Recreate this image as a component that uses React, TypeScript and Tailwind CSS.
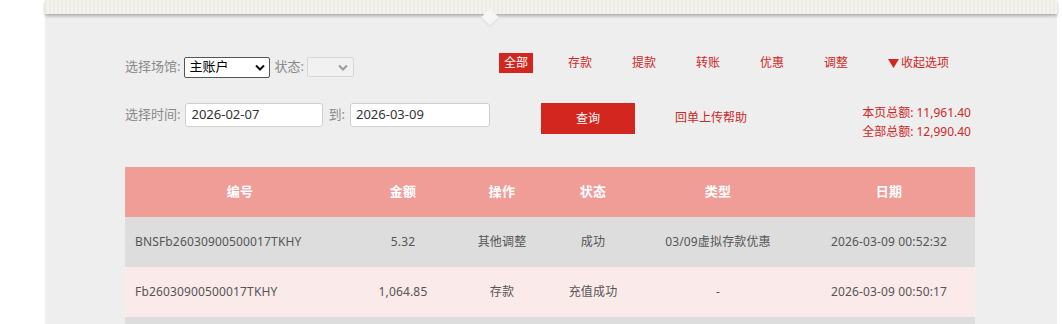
const tabs = ["存款", "提款", "转账", "优惠", "调整"]

const rows = [
  { id: "BNSFb26030900500017TKHY", amount: "5.32", op: "其他调整", status: "成功", type: "03/09虚拟存款优惠", date: "2026-03-09 00:52:32", bg: "bg-[#dddddd]" },
  { id: "Fb26030900500017TKHY", amount: "1,064.85", op: "存款", status: "充值成功", type: "-", date: "2026-03-09 00:50:17", bg: "bg-[#fbeaea]" },
]

function Chevron({ color }: { color: string }) {
  return (
    <svg width="10" height="7" viewBox="0 0 10 7" className="shrink-0">
      <path d="M1 1.5 L5 5.5 L9 1.5" fill="none" stroke={color} strokeWidth="2" />
    </svg>
  )
}

export default function App() {
  return (
    <div className="w-full h-[324px] bg-white overflow-hidden font-['Noto_Sans','Noto_Sans_CJK_SC',sans-serif]">
      <div className="relative ml-[45px] w-[1012px] h-full bg-[#eeeeee]">
        {/* textured banner edge */}
        <div className="h-[14px] bg-[repeating-linear-gradient(90deg,#eeece5_0px,#eeece5_2px,#f4f2ec_2px,#f4f2ec_4px)] shadow-[0_2px_3px_rgba(0,0,0,0.28)]" />
        <div className="absolute left-[439px] top-[11px] w-[12px] h-[12px] rotate-45 bg-[#f6f6f6] shadow-[1px_1px_2px_rgba(0,0,0,0.08)]" />

        <div className="pl-[80px] pt-[39px]">
          {/* row 1 */}
          <div className="flex h-[26px]">
            <div className="w-[374px] flex items-center gap-[3px] pt-[2px] text-[13px] text-[#8a8a8a]">
              <span>选择场馆:</span>
              <div className="ml-[1px] w-[86px] h-[21px] flex items-center justify-between px-[4px] border border-[#555] rounded-[2px] bg-white text-[13px] text-black">
                <span>主账户</span>
                <Chevron color="#111" />
              </div>
              <span className="ml-[1px]">状态:</span>
              <div className="w-[47px] h-[20px] flex items-center justify-end pr-[5px] border border-[#d6d6d6] rounded-[2px] bg-[#f1f1f1]">
                <Chevron color="#9a9a9a" />
              </div>
            </div>
            <div className="flex items-start text-[12px] text-[#d0271f]">
              <span className="w-[34px] h-[20px] leading-[20px] text-center bg-[#d2261e] text-white">全部</span>
              <div className="flex ml-[35px] gap-[40px] leading-[20px]">
                {tabs.map((t) => (
                  <span key={t}>{t}</span>
                ))}
                <span className="flex items-center">
                  <svg width="11" height="9" viewBox="0 0 11 9" className="mr-[2px]">
                    <path d="M0 0 H11 L5.5 9 Z" fill="#d0271f" />
                  </svg>
                  收起选项
                </span>
              </div>
            </div>
          </div>

          {/* row 2 */}
          <div className="flex items-start mt-[24px] w-[850px]">
            <div className="flex items-center h-[24px] text-[13px] text-[#8a8a8a]">
              <span>选择时间:</span>
              <div className="ml-[5px] w-[138px] h-[24px] flex items-center px-[5px] border border-[#cfcfcf] rounded-[3px] bg-white text-[13px] text-[#333]">2026-02-07</div>
              <span className="ml-[5px]">到:</span>
              <div className="ml-[5px] w-[140px] h-[24px] flex items-center px-[5px] border border-[#cfcfcf] rounded-[3px] bg-white text-[13px] text-[#333]">2026-03-09</div>
            </div>
            <button className="ml-[51px] w-[94px] h-[31px] bg-[#d2261e] text-white text-[12px]">查询</button>
            <span className="ml-[40px] mt-[6px] text-[12px] text-[#d0271f]">回单上传帮助</span>
            <div className="ml-auto mr-[4px] flex flex-col items-end text-[12px] leading-[19px] text-[#d0271f]">
              <span>本页总额: 11,961.40</span>
              <span>全部总额: 12,990.40</span>
            </div>
          </div>

          {/* table */}
          <table className="mt-[26px] w-[850px] table-fixed border-collapse text-[12px] text-[#555] tracking-[0.15px]">
            <colgroup>
              <col className="w-[230px]" />
              <col className="w-[96px]" />
              <col className="w-[102px]" />
              <col className="w-[80px]" />
              <col className="w-[170px]" />
              <col className="w-[172px]" />
            </colgroup>
            <thead>
              <tr className="h-[50px] bg-[#f09d98] text-white text-[13px] font-bold">
                <th>编号</th>
                <th>金额</th>
                <th>操作</th>
                <th>状态</th>
                <th>类型</th>
                <th>日期</th>
              </tr>
            </thead>
            <tbody>
              {rows.map((r) => (
                <tr key={r.id} className={`h-[50px] ${r.bg}`}>
                  <td className="pl-[10px]">{r.id}</td>
                  <td className="text-center">{r.amount}</td>
                  <td className="text-center">{r.op}</td>
                  <td className="text-center">{r.status}</td>
                  <td className="text-center">{r.type}</td>
                  <td className="text-center">{r.date}</td>
                </tr>
              ))}
              <tr className="h-[50px] bg-[#dddddd]">
                <td colSpan={6} />
              </tr>
            </tbody>
          </table>
        </div>
      </div>
    </div>
  )
}
